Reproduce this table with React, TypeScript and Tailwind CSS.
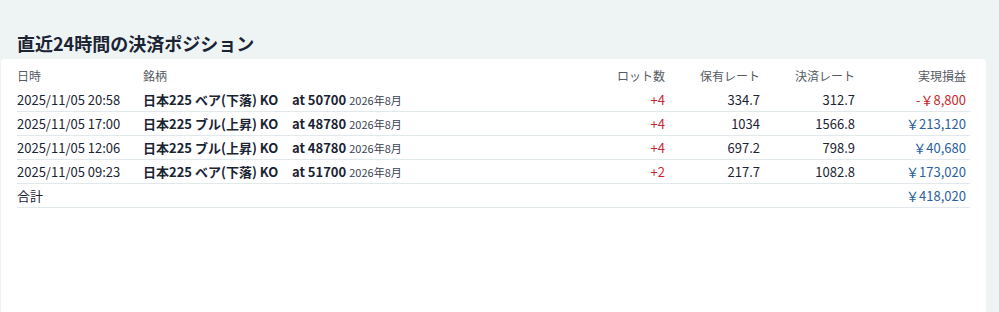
import React from "react";

type Row = {
  dt: string;
  name: string;
  at: string;
  month: string;
  lot: string;
  hold: string;
  settle: string;
  pl: string;
  neg?: boolean;
};

const rows: Row[] = [
  { dt: "2025/11/05 20:58", name: "日本225 ベア(下落) KO", at: "at 50700", month: "2026年8月", lot: "+4", hold: "334.7", settle: "312.7", pl: "-￥8,800", neg: true },
  { dt: "2025/11/05 17:00", name: "日本225 ブル(上昇) KO", at: "at 48780", month: "2026年8月", lot: "+4", hold: "1034", settle: "1566.8", pl: "￥213,120" },
  { dt: "2025/11/05 12:06", name: "日本225 ブル(上昇) KO", at: "at 48780", month: "2026年8月", lot: "+4", hold: "697.2", settle: "798.9", pl: "￥40,680" },
  { dt: "2025/11/05 09:23", name: "日本225 ベア(下落) KO", at: "at 51700", month: "2026年8月", lot: "+2", hold: "217.7", settle: "1082.8", pl: "￥173,020" },
];

const grid = "grid grid-cols-[126px_1fr_95px_95px_95px_111px] items-center";

export default function App() {
  return (
    <div className="w-[999px] h-[312px] overflow-hidden bg-[#eef3f4] text-[#1b2433] font-['Noto_Sans_CJK_JP','Noto_Sans',sans-serif]">
      <h1 className="pl-[17px] pt-[30px] pb-[3px] text-[18px] leading-[26px] font-bold text-[#1b2433]">
        直近24時間の決済ポジション
      </h1>
      <div className="ml-[1px] w-[985px] h-[260px] bg-white rounded-t-[4px] pt-[5px] pl-[16px] pr-[16px]">
        <div className={`${grid} h-[24px] text-[12px] text-[#555b63]`}>
          <div>日時</div>
          <div>銘柄</div>
          <div className="text-right pr-[4px]">ロット数</div>
          <div className="text-right pr-[4px]">保有レート</div>
          <div className="text-right pr-[4px]">決済レート</div>
          <div className="text-right pr-[4px]">実現損益</div>
        </div>
        {rows.map((r, i) => (
          <div key={i} className={`${grid} h-[24px] text-[13px] border-b border-[#e2e9ea]`}>
            <div className="whitespace-nowrap">{r.dt}</div>
            <div className="whitespace-nowrap flex items-baseline">
              <span className="font-bold w-[149px] shrink-0">{r.name}</span>
              <span className="font-bold">{r.at}</span>
              <span className="ml-[3px] text-[11px] text-[#3a4250]">{r.month}</span>
            </div>
            <div className="text-right pr-[4px] text-[#c62a2f]">{r.lot}</div>
            <div className="text-right pr-[4px]">{r.hold}</div>
            <div className="text-right pr-[4px]">{r.settle}</div>
            <div className={`text-right pr-[4px] ${r.neg ? "text-[#c62a2f]" : "text-[#2b5f9e]"}`}>{r.pl}</div>
          </div>
        ))}
        <div className={`${grid} h-[24px] text-[13px] border-b border-[#e2e9ea]`}>
          <div>合計</div>
          <div />
          <div />
          <div />
          <div />
          <div className="text-right pr-[4px] text-[#2b5f9e]">￥418,020</div>
        </div>
      </div>
    </div>
  );
}
